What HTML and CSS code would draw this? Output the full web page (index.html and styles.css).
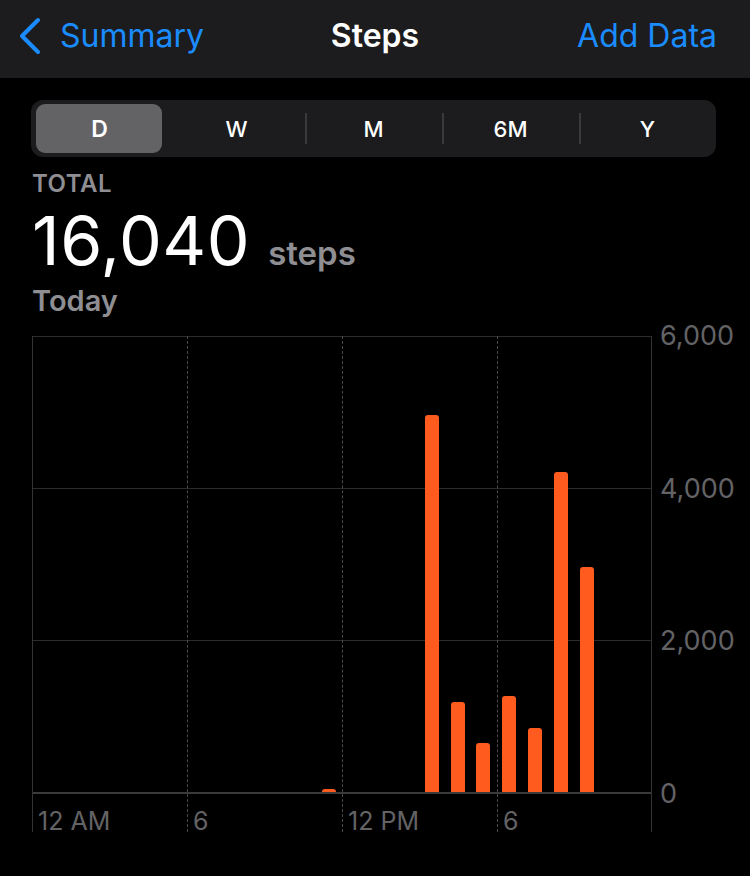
FILE: index.html
```html
<!DOCTYPE html>
<html lang="en">
<head>
    <meta charset="UTF-8">
    <title>Steps</title>
    <link rel="stylesheet" href="styles.css">
</head>
<body>
<div class="nav">
    <div class="nav-left">
        <svg class="chevron" width="24" height="40" viewBox="0 0 24 40">
            <path d="M20 3 L4 19 L20 35" fill="none" stroke="#1a8cff" stroke-width="4" stroke-linecap="round" stroke-linejoin="round"/>
        </svg>
        <span>Summary</span>
    </div>
    <div class="nav-title">Steps</div>
    <div class="nav-right">Add Data</div>
</div>

<div class="content">
    <div class="segments">
        <div class="seg selected">D</div>
        <div class="seg">W</div>
        <div class="seg sep">M</div>
        <div class="seg sep">6M</div>
        <div class="seg sep">Y</div>
    </div>

    <div class="total-label">TOTAL</div>
    <div class="total">
        <span class="total-num">16,040</span>
        <span class="total-unit">steps</span>
    </div>
    <div class="total-date">Today</div>

    <div class="chart">
        <div class="plot-wrap">
            <!-- grid lines -->
            <div class="hline" style="top: 0"></div>
            <div class="hline" style="top: 152px"></div>
            <div class="hline" style="top: 304px"></div>
            <div class="hline axis" style="top: 456px"></div>
            <div class="vline" style="left: 0"></div>
            <div class="vline dashed" style="left: 155px"></div>
            <div class="vline dashed" style="left: 310px"></div>
            <div class="vline dashed" style="left: 465px"></div>
            <div class="vline" style="left: 619px"></div>

            <div class="bars" id="bars"></div>

            <div class="xlabels">
                <span>12 AM</span>
                <span>6</span>
                <span>12 PM</span>
                <span>6</span>
            </div>
        </div>
        <div class="yaxis">
            <span>6,000</span>
            <span>4,000</span>
            <span>2,000</span>
            <span>0</span>
        </div>
    </div>
</div>

<script>
    //每小时步数
    var steps = [0, 0, 0, 0, 0, 0, 0, 0, 0, 0, 0, 20, 0, 0, 0, 4960, 1180, 650, 1260, 840, 4210, 2960, 0, 0];
    var bars = document.getElementById("bars");
    for (var i = 0; i < steps.length; i++) {
        var hour = document.createElement("div");
        hour.className = "hour";
        if (steps[i] > 0) {
            var bar = document.createElement("div");
            bar.className = "bar";
            bar.style.height = Math.max(3, steps[i] / 6000 * 456) + "px";
            hour.appendChild(bar);
        }
        bars.appendChild(hour);
    }
</script>
</body>
</html>
```

FILE: styles.css
```css
body {
    margin: 0;
    background-color: #000;
    color: #fff;
    font-family: Inter, "Noto Sans", sans-serif;
}
.nav {
    height: 78px;
    background-color: #1c1c1e;
    display: grid;
    grid-template-columns: 1fr auto 1fr;
    align-items: center;
    padding: 0 33px;
    font-size: 32px;
}
.nav-left {
    display: flex;
    align-items: center;
    color: #1a8cff;
    margin-top: -8px;
    margin-left: -15px;
}
.chevron {
    margin-right: 18px;
    margin-top: 4px;
}
.nav-title {
    font-weight: 600;
    margin-top: -8px;
}
.nav-right {
    text-align: right;
    color: #1a8cff;
    margin-top: -8px;
}
.content {
    padding-left: 32px;
}
.segments {
    margin-top: 22px;
    width: 685px;
    height: 49px;
    padding: 4px 0;
    margin-left: -1px;
    background-color: #1c1c1e;
    border-radius: 12px;
    display: flex;
}
.seg {
    flex: 1;
    display: flex;
    align-items: center;
    justify-content: center;
    font-size: 22px;
    font-weight: 500;
    position: relative;
    z-index: 0;
}
.seg.sep:before {
    content: "";
    position: absolute;
    left: 0;
    top: 9px;
    height: 31px;
    border-left: 2px solid #3a3a3c;
}
.selected {
    font-weight: 600;
    font-size: 23px;
}
.selected:after {
    content: "";
    position: absolute;
    top: 0;
    bottom: 0;
    left: 5px;
    right: 6px;
    background-color: #636366;
    border-radius: 9px;
    z-index: -1;
}
.total-label {
    margin-top: 13px;
    font-size: 24px;
    font-weight: 600;
    letter-spacing: 0.5px;
    color: #8e8e93;
    line-height: 28px;
}
.total {
    display: flex;
    align-items: baseline;
    line-height: 80px;
    margin-top: 2px;
}
.total-num {
    font-size: 68px;
    font-weight: 400;
    letter-spacing: 0.5px;
}
.total-unit {
    margin-left: 18px;
    font-size: 33px;
    font-weight: 600;
    color: #8e8e93;
}
.total-date {
    font-size: 29px;
    font-weight: 600;
    color: #8e8e93;
    line-height: 30px;
    margin-top: -7px;
}
.chart {
    display: flex;
    margin-top: 8px;
}
.plot-wrap {
    position: relative;
    width: 620px;
    height: 496px;
    margin-top: 12px;
}
.hline {
    position: absolute;
    left: 0;
    width: 620px;
    border-top: 1px solid #2c2c2e;
}
.hline.axis {
    border-top: 2px solid #3a3a3c;
}
.vline {
    position: absolute;
    top: 0;
    height: 496px;
    border-left: 1px solid #333335;
}
.vline.dashed {
    border-left: 1px dashed #4a4a4c;
}
.bars {
    position: absolute;
    left: 0;
    top: 0;
    width: 619px;
    height: 456px;
    display: flex;
    align-items: flex-end;
}
.hour {
    flex: 1;
    display: flex;
    justify-content: center;
}
.bar {
    width: 14px;
    background-color: #ff5b1f;
    border-radius: 3px 3px 0 0;
}
.xlabels {
    position: absolute;
    left: 0;
    top: 461px;
    width: 620px;
    height: 38px;
    display: flex;
    align-items: flex-end;
}
.xlabels span {
    width: 155px;
    padding-left: 6px;
    font-size: 25px;
    line-height: 28px;
    color: #636366;
}
.yaxis {
    height: 482px;
    margin-left: 8px;
    display: flex;
    flex-direction: column;
    justify-content: space-between;
}
.yaxis span {
    line-height: 24px;
    font-size: 27px;
    color: #636366;
}
```
